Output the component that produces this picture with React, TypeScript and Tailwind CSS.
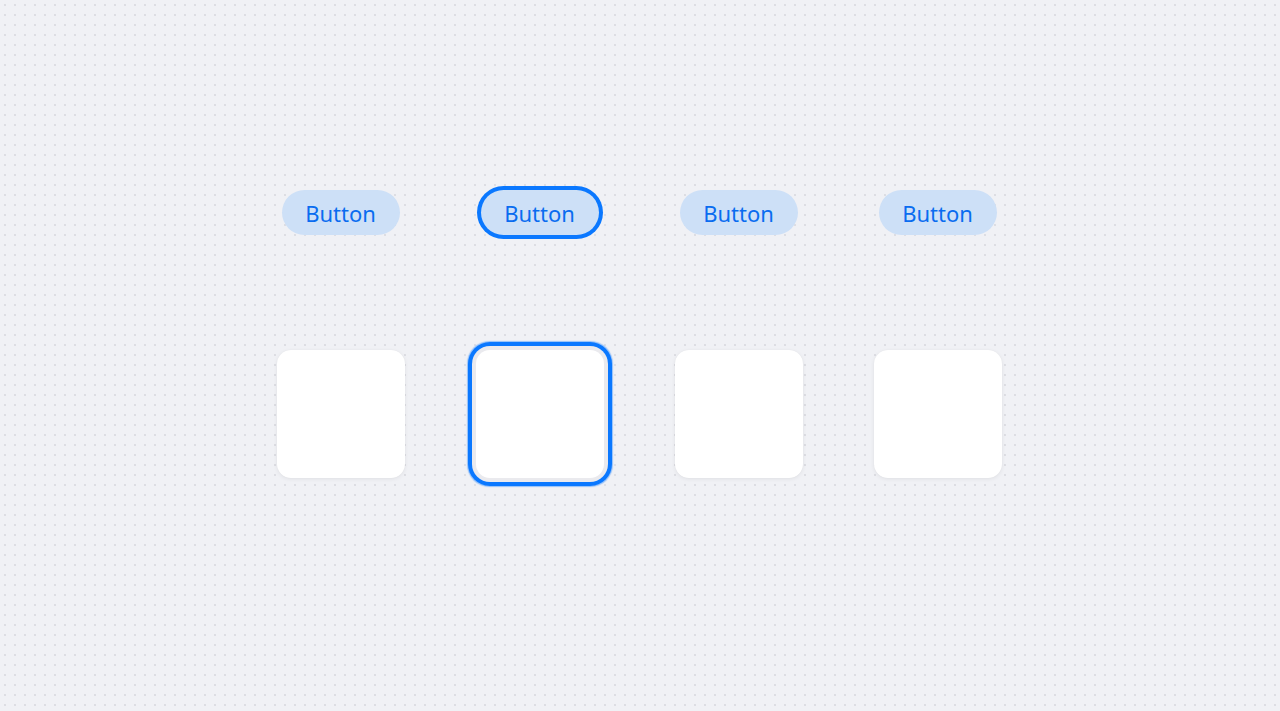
const items = [0, 1, 2, 3];

function PillButton({ focused }: { focused?: boolean }) {
  return (
    <button
      className={`h-[45px] w-[118px] rounded-full bg-[#cde0f7] pt-[1px] text-[22px] leading-none text-[#0a6cf0] ${
        focused ? 'shadow-[0_0_0_4px_#0a78ff]' : ''
      }`}
      style={{ fontFamily: '"Noto Sans", sans-serif' }}
    >
      Button
    </button>
  );
}

function Card({ focused }: { focused?: boolean }) {
  return (
    <div
      className={`h-[128px] w-[128px] rounded-[14px] bg-white ${
        focused
          ? 'shadow-[0_0_0_4px_#eaeaee,0_0_0_8px_#0a78ff,0_0_1px_8.5px_rgba(10,120,255,0.4)]'
          : 'shadow-[0_1px_4px_rgba(0,0,0,0.07),0_0_1px_rgba(0,0,0,0.05)]'
      }`}
    />
  );
}

export default function App() {
  return (
    <div className="min-h-[711px] w-full bg-[#f0f1f5] bg-[radial-gradient(circle,#d6d7dd_0.6px,transparent_1px)] bg-[size:10px_10px] pt-[190px]">
      <div className="mx-auto grid w-[796px] -translate-x-[1px] grid-cols-4 gap-y-[115px]">
        {items.map((i) => (
          <div key={`b${i}`} className="flex justify-center">
            <PillButton focused={i === 1} />
          </div>
        ))}
        {items.map((i) => (
          <div key={`c${i}`} className="flex justify-center">
            <Card focused={i === 1} />
          </div>
        ))}
      </div>
    </div>
  );
}
